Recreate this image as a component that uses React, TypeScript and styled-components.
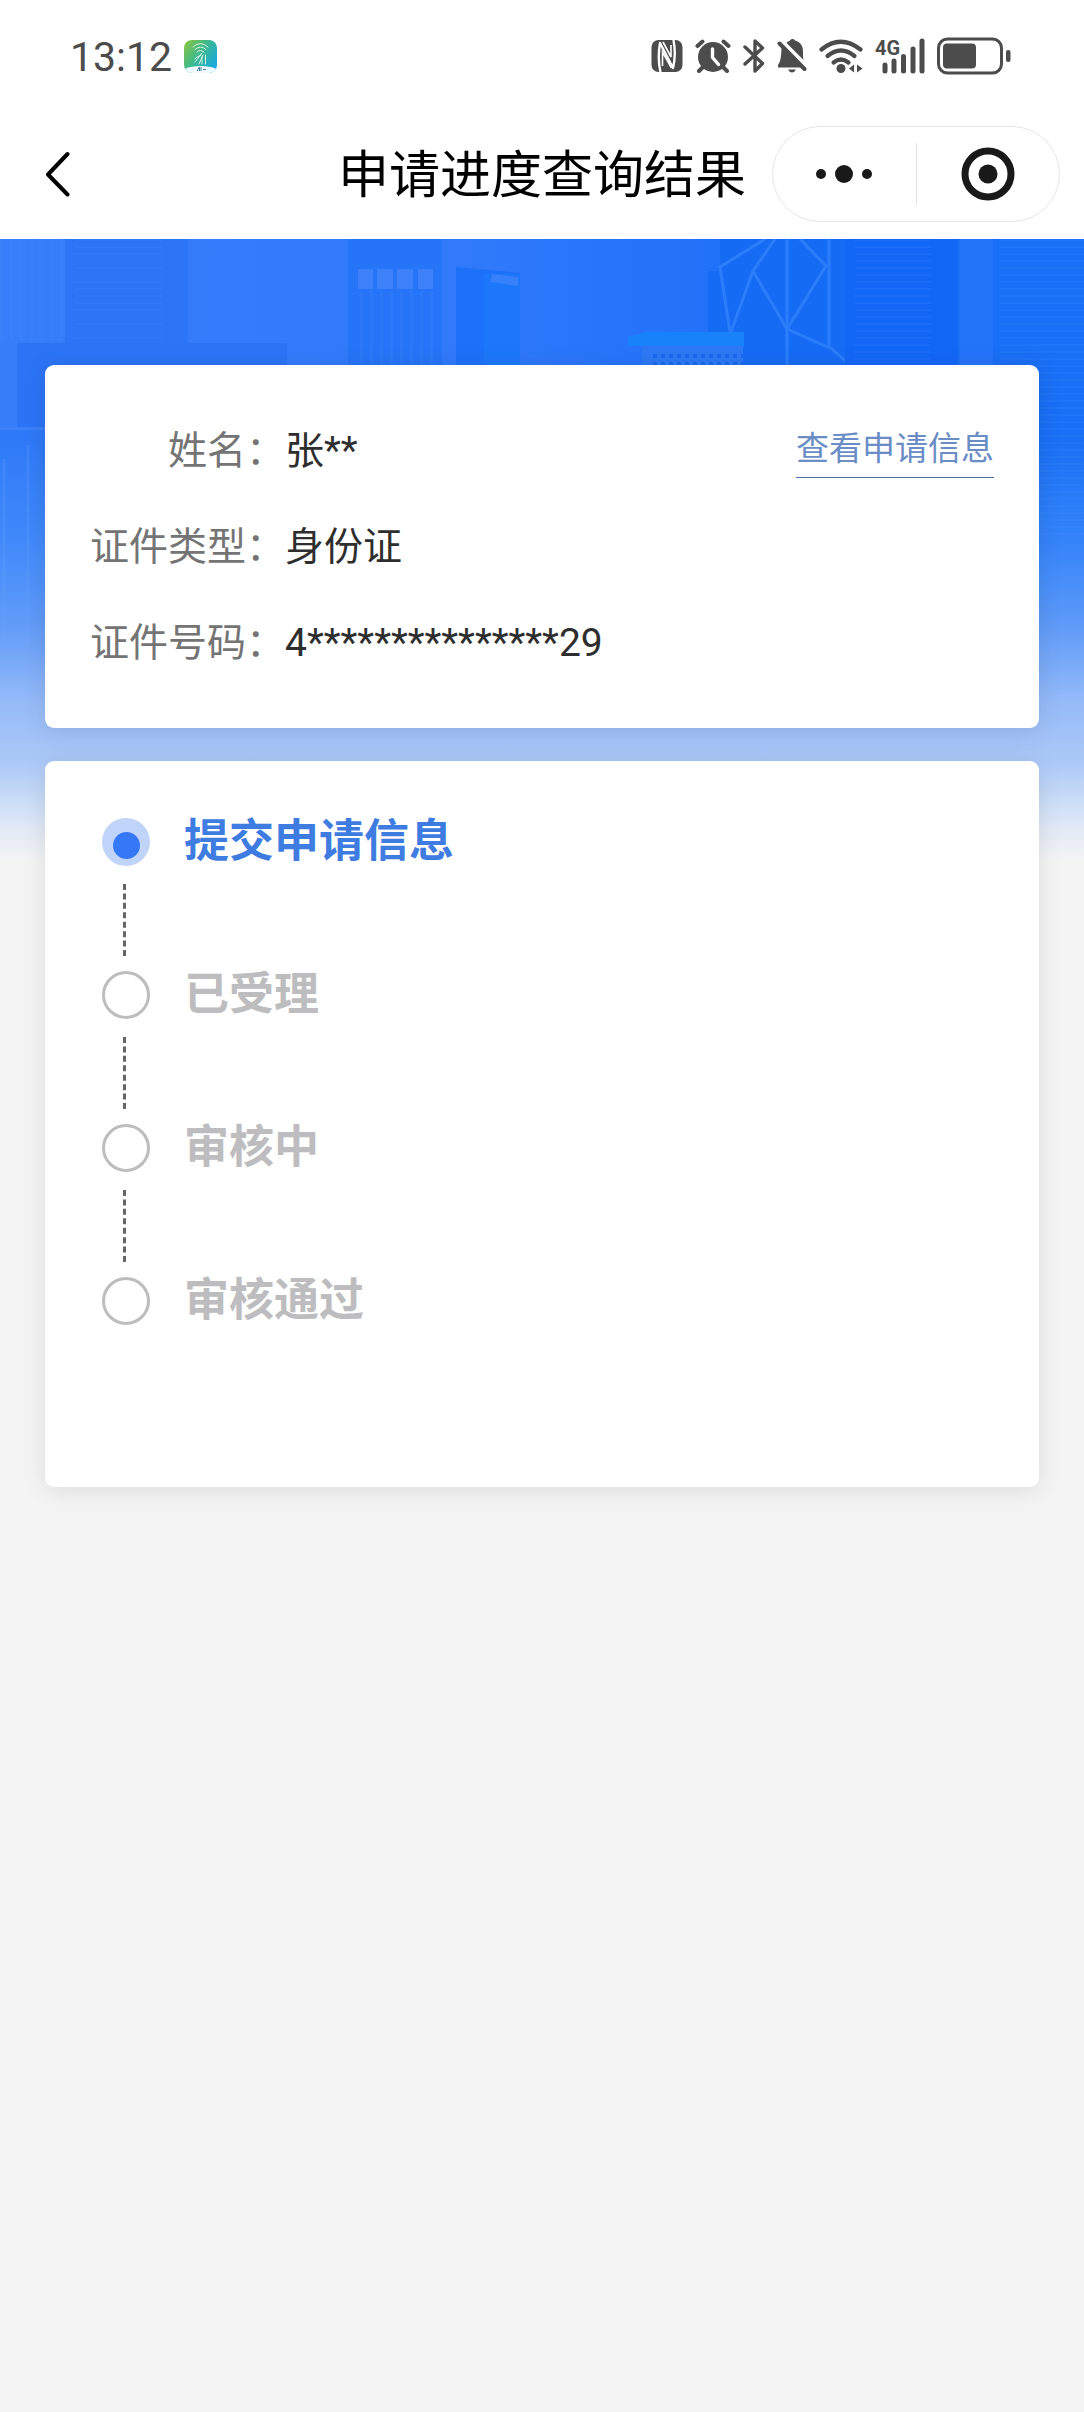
import React from "react";
import styled, { createGlobalStyle } from "styled-components";

const ink = "#4c4c4c";

const GlobalStyle = createGlobalStyle`
  *, *::before, *::after { box-sizing: border-box; }
  body {
    margin: 0;
    background: #f4f4f4;
    font-family: Roboto, "Noto Sans CJK SC", sans-serif;
  }
`;

const Page = styled.div`
  min-height: 100vh;
  display: flex;
  flex-direction: column;
`;

const StatusBar = styled.div`
  height: 112px;
  padding: 0 73px 0 70px;
  display: flex;
  align-items: center;
  justify-content: space-between;
  background: #fff;
`;

const StatusGroup = styled.div`
  display: flex;
  align-items: center;
  gap: 12px;
`;

const Clock = styled.time`
  padding-top: 2px;
  font-size: 41px;
  line-height: 56px;
  color: ${ink};
`;

const NavBar = styled.header`
  height: 127px;
  padding: 0 24px 3px;
  display: grid;
  grid-template-columns: 1fr auto 1fr;
  align-items: center;
  background: #fff;
`;

const BackButton = styled.button`
  width: 72px;
  height: 72px;
  padding: 0 0 0 20px;
  border: 0;
  background: none;
  display: flex;
  align-items: center;
  cursor: pointer;
`;

const Title = styled.h1`
  margin: 0;
  padding-top: 4px;
  font-size: 51px;
  line-height: 64px;
  font-weight: 400;
  color: #000;
  white-space: nowrap;
`;

const Capsule = styled.div`
  justify-self: end;
  width: 288px;
  height: 96px;
  display: flex;
  align-items: center;
  border: 1px solid #e6e6e6;
  border-radius: 48px;
`;

const CapsuleButton = styled.button`
  flex: 1;
  height: 100%;
  padding: 0;
  border: 0;
  background: none;
  display: flex;
  align-items: center;
  justify-content: center;
  cursor: pointer;
`;

const CapsuleDivider = styled.span`
  width: 1px;
  height: 62px;
  background: #e2e2e2;
`;

const Main = styled.main`
  flex: 1;
  display: grid;
  grid-template-columns: minmax(0, 1fr);
  align-items: start;
`;

const Scene = styled.svg`
  grid-area: 1 / 1;
  display: block;
  width: 100%;
  height: 622px;
`;

const Content = styled.div`
  grid-area: 1 / 1;
  z-index: 1;
  padding: 126px 45px 48px;
  display: flex;
  flex-direction: column;
  gap: 33px;
`;

const Card = styled.section`
  background: #fff;
  border-radius: 9px;
  box-shadow: 0 3px 24px rgba(0, 0, 0, 0.1);
`;

const InfoCard = styled(Card)`
  padding: 59px 45px 58px;
  display: flex;
  align-items: flex-start;
  justify-content: space-between;
`;

const InfoList = styled.dl`
  margin: 0;
  display: grid;
  grid-template-columns: auto auto;
  row-gap: 42px;
  font-size: 39px;
  line-height: 54px;
`;

const InfoLabel = styled.dt`
  text-align: right;
  color: #747474;
`;

const InfoValue = styled.dd`
  margin: 0;
  color: #2e2e2e;
`;

const DetailLink = styled.a`
  padding-bottom: 3px;
  border-bottom: 1px solid #4a70b5;
  font-size: 33px;
  line-height: 50px;
  color: #6a8dc6;
  text-decoration: none;
`;

const StepsCard = styled(Card)`
  padding: 57px 57px 162px;
`;

const StepList = styled.ol`
  margin: 0;
  padding: 0;
  list-style: none;
`;

const Step = styled.li`
  display: flex;
  gap: 34px;
`;

const Rail = styled.div`
  width: 48px;
  display: flex;
  flex-direction: column;
`;

const Marker = styled.span<{ $active: boolean }>`
  width: 48px;
  height: 48px;
  padding-top: ${(p) => (p.$active ? "6px" : "0")};
  display: flex;
  align-items: center;
  justify-content: center;
  border: ${(p) => (p.$active ? "0" : "3px solid #bdbdbd")};
  border-radius: 50%;
  background: ${(p) => (p.$active ? "#c0d4fa" : "#fff")};
`;

const MarkerDot = styled.span`
  width: 27px;
  height: 27px;
  border-radius: 50%;
  background: #3478f8;
`;

const Connector = styled.span`
  height: 72px;
  margin: 18px 0 15px 21px;
  border-left: 3px dashed #666;
`;

const StepName = styled.span<{ $active: boolean }>`
  font-size: 45px;
  line-height: 48px;
  font-weight: 700;
  color: ${(p) => (p.$active ? "#3f7ce2" : "#bdbdc0")};
`;

const AppBadge = () => (
  <svg width="33" height="33" viewBox="0 0 33 33" aria-hidden="true">
    <defs>
      <linearGradient id="badge" x1="0" y1="0" x2="1" y2="0.7">
        <stop offset="0" stopColor="#8cc63a" />
        <stop offset="0.5" stopColor="#3fb98d" />
        <stop offset="1" stopColor="#18a9e0" />
      </linearGradient>
      <clipPath id="badgeClip">
        <rect width="33" height="33" rx="8" />
      </clipPath>
    </defs>
    <g clipPath="url(#badgeClip)">
      <rect width="33" height="33" fill="url(#badge)" />
      <ellipse cx="16.500" cy="35" rx="22" ry="9" fill="#eefaff" />
    </g>
    <g fill="none" stroke="#d8f4e6" strokeWidth="1" strokeLinecap="round">
      <path d="M9 7q7.500-7 15 0M11 9.500q5.500-5 11 0M13 12q3.500-3 7 0" />
      <path d="M18 13l-7 9M19 15l-4 9M17 15q-5 2-6 4M18 17v7M21.500 15v9" />
    </g>
    <path d="M13 31l2.500-4v4M17 27v4M19 29.500h3" stroke="#4a7f9c" fill="none" />
  </svg>
);

const NfcIcon = () => (
  <svg width="32" height="32" viewBox="0 0 32 32" aria-hidden="true">
    <rect x="0.500" width="31" height="32" rx="7" fill={ink} />
    <path
      d="M9.500 32C7.500 24 7.500 12 9 3l13 25C24 20 24 8 22.500 0"
      stroke="#fff"
      strokeWidth="2.400"
      strokeLinejoin="round"
      fill="none"
    />
    <path d="M11.500 26V12l9 16M12 2l8 15V5" stroke="#fff" strokeWidth="1.600" fill="none" />
  </svg>
);

const AlarmIcon = () => (
  <svg width="36" height="34" viewBox="0 0 36 34" aria-hidden="true">
    <circle cx="18" cy="18" r="15" fill={ink} />
    <path
      d="M2.500 7l5-4.500M33.500 7l-5-4.500M8 28l-4 4M28 28l4 4"
      stroke={ink}
      strokeWidth="4"
      strokeLinecap="round"
    />
    <path
      d="M17.500 10v8.500l6 7"
      stroke="#fff"
      strokeWidth="3.400"
      strokeLinecap="round"
      strokeLinejoin="round"
      fill="none"
    />
  </svg>
);

const BluetoothIcon = () => (
  <svg width="22" height="36" viewBox="0 0 22 36" aria-hidden="true">
    <path
      d="M2 9l17.500 16.500-7.500 7.500V3l7.500 7L2 26"
      stroke={ink}
      strokeWidth="3.400"
      strokeLinecap="round"
      strokeLinejoin="round"
      fill="none"
    />
  </svg>
);

const BellOffIcon = () => (
  <svg width="30" height="34" viewBox="0 0 30 34" aria-hidden="true">
    <path
      d="M4.500 9c-.3 9-1 14-3.500 17v2.500h24zM9 4.500c1.500-2 3-2.500 4-3 1-2 4-2 5 0 5.500 1.500 8 5.500 8 10.500 0 3 0 6 .5 10z"
      fill={ink}
    />
    <path d="M7 3.500l22 22" stroke="#fff" strokeWidth="3" />
    <path d="M2.500 4.500l25 25.500" stroke={ink} strokeWidth="4" strokeLinecap="round" />
    <path d="M11 30.500h8q-1.500 3-4 3t-4-3z" fill={ink} />
  </svg>
);

const WifiIcon = () => (
  <svg width="44" height="34" viewBox="0 0 44 34" aria-hidden="true">
    <g fill="none" stroke={ink} strokeWidth="4.200" strokeLinecap="round">
      <path d="M2.500 10.500q19-15.500 39 0" />
      <path d="M8.500 17q13.500-11 27 0" />
      <path d="M14.500 23.500q7.500-6 15 0" />
    </g>
    <circle cx="22" cy="29.500" r="4.500" fill={ink} />
    <path d="M35 25.500v8l-5-4zM38 25.500v8l5.500-4z" fill={ink} />
  </svg>
);

const SignalIcon = () => (
  <svg width="50" height="48" viewBox="0 -6 50 48" aria-hidden="true">
    <text
      x="0"
      y="17"
      fontFamily="Roboto, sans-serif"
      fontSize="20"
      fontWeight="700"
      fill={ink}
    >
      4G
    </text>
    <path
      d="M10 27v6M19 23v10M28.500 18.500v14.500M38 11v22M47 3v30"
      stroke={ink}
      strokeWidth="5"
      strokeLinecap="round"
    />
  </svg>
);

const BatteryIcon = () => (
  <svg width="74" height="38" viewBox="0 0 74 38" aria-hidden="true">
    <rect x="1.500" y="2" width="63" height="34" rx="9" fill="none" stroke={ink} strokeWidth="3" />
    <rect x="6" y="6.500" width="33" height="25" rx="4" fill={ink} />
    <rect x="69" y="13" width="4.500" height="12" rx="2" fill={ink} />
  </svg>
);

const BackIcon = () => (
  <svg width="26" height="46" viewBox="0 0 26 46" aria-hidden="true">
    <path
      d="M23.500 3L4 23.500l19.500 20"
      stroke="#000"
      strokeWidth="4"
      strokeLinecap="round"
      strokeLinejoin="round"
      fill="none"
    />
  </svg>
);

const MoreIcon = () => (
  <svg width="58" height="20" viewBox="0 0 58 20" aria-hidden="true">
    <circle cx="6" cy="10" r="5" fill="#191919" />
    <circle cx="29" cy="10" r="9" fill="#191919" />
    <circle cx="52" cy="10" r="5" fill="#191919" />
  </svg>
);

const CloseIcon = () => (
  <svg width="54" height="54" viewBox="0 0 54 54" aria-hidden="true">
    <circle cx="27" cy="27" r="23" fill="none" stroke="#191919" strokeWidth="7" />
    <circle cx="27" cy="27" r="9.500" fill="#191919" />
  </svg>
);

const Skyline = () => (
  <Scene viewBox="0 0 1084 622" preserveAspectRatio="xMidYMin slice" aria-hidden="true">
    <defs>
      <linearGradient id="sky" x1="0" y1="0" x2="1" y2="0">
        <stop offset="0" stopColor="#387efa" />
        <stop offset="0.45" stopColor="#2f79fb" />
        <stop offset="0.7" stopColor="#1f70f8" />
        <stop offset="1" stopColor="#1a70f5" />
      </linearGradient>
      <linearGradient id="fade" x1="0" y1="0" x2="0" y2="1">
        <stop offset="0.32" stopColor="#5ba0ff" stopOpacity="0" />
        <stop offset="0.48" stopColor="#5ba0ff" stopOpacity="0.4" />
        <stop offset="0.62" stopColor="#6ba2f8" stopOpacity="0.85" />
        <stop offset="0.74" stopColor="#94baf8" />
        <stop offset="0.84" stopColor="#abc8f7" />
        <stop offset="0.9" stopColor="#c9dcf7" />
        <stop offset="0.95" stopColor="#e2eaf5" />
        <stop offset="1" stopColor="#f4f4f4" />
      </linearGradient>
      <pattern id="floors" width="8" height="7" patternUnits="userSpaceOnUse">
        <rect width="8" height="2" fill="#4a8cff" opacity="0.12" />
      </pattern>
      <pattern id="columns" width="10" height="8" patternUnits="userSpaceOnUse">
        <rect width="3" height="8" fill="#4a8cff" opacity="0.14" />
      </pattern>
    </defs>
    <rect width="1084" height="622" fill="url(#sky)" />
    <rect width="62" height="102" fill="url(#columns)" />
    <rect x="65" width="123" height="104" fill="#2d75f7" />
    <rect x="74" width="88" height="102" fill="url(#floors)" />
    <rect x="17" y="104" width="270" height="400" fill="#2b74f6" />
    <rect y="190" width="45" height="432" fill="#2e79f7" />
    <rect y="188" width="45" height="3" fill="#3a81fa" />
    <path d="M4 220v180M28 206v200" stroke="#5b9bff" strokeWidth="3" opacity="0.3" />
    <rect x="348" width="94" height="130" fill="#2674f7" />
    <rect x="360" y="52" width="76" height="78" fill="url(#columns)" />
    <path d="M358 30h15v20h-15zM377 30h16v20h-16zM397 30h16v20h-16zM418 30h15v20h-15z" fill="#3c80fa" />
    <path d="M456 28l64 6v100h-64z" fill="#1c71f8" />
    <path d="M484 34l36 2v94h-36z" fill="#1c77fa" />
    <path d="M492 35l26 3v9l-28-4z" fill="#3780fb" />
    <path d="M720 0h125v130H708V32h12z" fill="#166bf5" />
    <path d="M628 98l18-5h98v14H628z" fill="#1782fa" />
    <rect x="642" y="107" width="101" height="23" fill="#2d78f6" />
    <path d="M653 117h90M653 125h90" stroke="#1b68ee" strokeWidth="4" strokeDasharray="4 4" />
    <g fill="none" stroke="#2a7efb" strokeWidth="3">
      <path d="M765 0l-45 28 10 65M775 0l-22 32-22 61M753 32l34 58 39-63-26-27" />
      <path d="M787 0v130M787 90l45 20 20 18M829 0v109" />
    </g>
    <rect x="845" width="113" height="130" fill="#1367f6" />
    <rect x="855" width="76" height="130" fill="url(#floors)" />
    <rect x="960" width="33" height="130" fill="#2474fa" />
    <rect x="993" width="91" height="400" fill="#196ff5" />
    <rect x="1000" width="84" height="300" fill="url(#floors)" />
    <rect width="1084" height="622" fill="url(#fade)" />
  </Scene>
);

const applicant = [
  { label: "姓名", value: "张**" },
  { label: "证件类型", value: "身份证" },
  { label: "证件号码", value: "4***************29" },
];

const steps = [
  { name: "提交申请信息", active: true },
  { name: "已受理", active: false },
  { name: "审核中", active: false },
  { name: "审核通过", active: false },
];

export default function App() {
  return (
    <Page lang="zh-CN">
      <GlobalStyle />
      <StatusBar>
        <StatusGroup>
          <Clock>13:12</Clock>
          <AppBadge />
        </StatusGroup>
        <StatusGroup>
          <NfcIcon />
          <AlarmIcon />
          <BluetoothIcon />
          <BellOffIcon />
          <WifiIcon />
          <SignalIcon />
          <BatteryIcon />
        </StatusGroup>
      </StatusBar>
      <NavBar>
        <BackButton type="button" aria-label="返回">
          <BackIcon />
        </BackButton>
        <Title>申请进度查询结果</Title>
        <Capsule>
          <CapsuleButton type="button" aria-label="更多">
            <MoreIcon />
          </CapsuleButton>
          <CapsuleDivider />
          <CapsuleButton type="button" aria-label="关闭">
            <CloseIcon />
          </CapsuleButton>
        </Capsule>
      </NavBar>
      <Main>
        <Skyline />
        <Content>
          <InfoCard>
            <InfoList>
              {applicant.map((row) => (
                <React.Fragment key={row.label}>
                  <InfoLabel>{row.label}：</InfoLabel>
                  <InfoValue>{row.value}</InfoValue>
                </React.Fragment>
              ))}
            </InfoList>
            <DetailLink href="#detail">查看申请信息</DetailLink>
          </InfoCard>
          <StepsCard>
            <StepList>
              {steps.map((step, index) => (
                <Step key={step.name} aria-current={step.active ? "step" : undefined}>
                  <Rail>
                    <Marker $active={step.active}>{step.active && <MarkerDot />}</Marker>
                    {index < steps.length - 1 && <Connector />}
                  </Rail>
                  <StepName $active={step.active}>{step.name}</StepName>
                </Step>
              ))}
            </StepList>
          </StepsCard>
        </Content>
      </Main>
    </Page>
  );
}
